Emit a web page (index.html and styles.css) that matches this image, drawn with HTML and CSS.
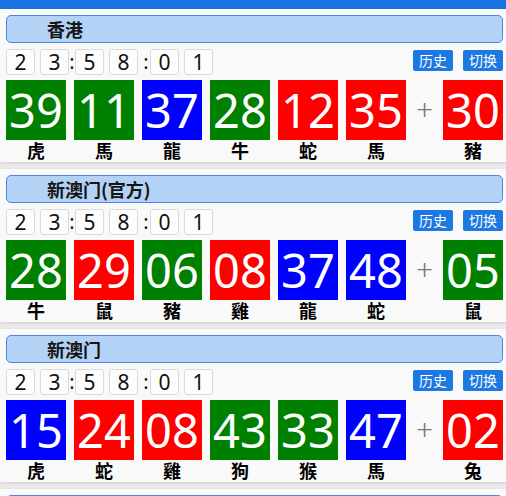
FILE: index.html
```html
<!DOCTYPE html>
<html lang="zh">
<head>
<meta charset="utf-8">
<link rel="stylesheet" href="styles.css">
</head>
<body>
<div class="topbar"></div>

<div class="section">
  <div class="title">香港</div>
  <div class="timer-row">
    <div class="timer">
      <span class="digit">2</span><span class="sp"></span><span class="digit">3</span><span class="colon c1">:</span><span class="digit">5</span><span class="sp"></span><span class="digit">8</span><span class="colon c2">:</span><span class="digit">0</span><span class="sp"></span><span class="digit">1</span>
    </div>
    <div class="btns"><span class="btn">历史</span><span class="btn">切换</span></div>
  </div>
  <div class="balls">
    <div class="ball"><div class="num green">39</div><div class="zod">虎</div></div>
    <div class="ball"><div class="num green">11</div><div class="zod">馬</div></div>
    <div class="ball"><div class="num blue">37</div><div class="zod">龍</div></div>
    <div class="ball"><div class="num green">28</div><div class="zod">牛</div></div>
    <div class="ball"><div class="num red">12</div><div class="zod">蛇</div></div>
    <div class="ball"><div class="num red">35</div><div class="zod">馬</div></div>
    <div class="plus">+</div>
    <div class="ball"><div class="num red">30</div><div class="zod">豬</div></div>
  </div>
</div>

<div class="section">
  <div class="title">新澳门(官方)</div>
  <div class="timer-row">
    <div class="timer">
      <span class="digit">2</span><span class="sp"></span><span class="digit">3</span><span class="colon c1">:</span><span class="digit">5</span><span class="sp"></span><span class="digit">8</span><span class="colon c2">:</span><span class="digit">0</span><span class="sp"></span><span class="digit">1</span>
    </div>
    <div class="btns"><span class="btn">历史</span><span class="btn">切换</span></div>
  </div>
  <div class="balls">
    <div class="ball"><div class="num green">28</div><div class="zod">牛</div></div>
    <div class="ball"><div class="num red">29</div><div class="zod">鼠</div></div>
    <div class="ball"><div class="num green">06</div><div class="zod">豬</div></div>
    <div class="ball"><div class="num red">08</div><div class="zod">雞</div></div>
    <div class="ball"><div class="num blue">37</div><div class="zod">龍</div></div>
    <div class="ball"><div class="num blue">48</div><div class="zod">蛇</div></div>
    <div class="plus">+</div>
    <div class="ball"><div class="num green">05</div><div class="zod">鼠</div></div>
  </div>
</div>

<div class="section">
  <div class="title">新澳门</div>
  <div class="timer-row">
    <div class="timer">
      <span class="digit">2</span><span class="sp"></span><span class="digit">3</span><span class="colon c1">:</span><span class="digit">5</span><span class="sp"></span><span class="digit">8</span><span class="colon c2">:</span><span class="digit">0</span><span class="sp"></span><span class="digit">1</span>
    </div>
    <div class="btns"><span class="btn">历史</span><span class="btn">切换</span></div>
  </div>
  <div class="balls">
    <div class="ball"><div class="num blue">15</div><div class="zod">虎</div></div>
    <div class="ball"><div class="num red">24</div><div class="zod">蛇</div></div>
    <div class="ball"><div class="num red">08</div><div class="zod">雞</div></div>
    <div class="ball"><div class="num green">43</div><div class="zod">狗</div></div>
    <div class="ball"><div class="num green">33</div><div class="zod">猴</div></div>
    <div class="ball"><div class="num blue">47</div><div class="zod">馬</div></div>
    <div class="plus">+</div>
    <div class="ball"><div class="num red">02</div><div class="zod">兔</div></div>
  </div>
</div>

<div class="section">
  <div class="title"></div>
</div>
</body>
</html>
```

FILE: styles.css
```css
html, body {
  margin: 0;
  padding: 0;
}
body {
  background: #ececec;
  font-family: "Noto Sans", "Noto Sans CJK SC", sans-serif;
  color: #000;
  overflow: hidden;
  height: 496px;
}
.topbar {
  height: 9px;
  background: #1b74e4;
}
.section {
  background: #f9f9f9;
  padding: 6px 3px 2px 6px;
  margin-bottom: 7px;
  box-shadow: 0 1px 4px rgba(0, 0, 0, 0.14);
}
.title {
  height: 26px;
  line-height: 26px;
  border: 1px solid #4a88d8;
  border-radius: 5px;
  background: #b4d2f6;
  padding-left: 40px;
  font-family: "Noto Sans CJK SC", sans-serif;
  font-weight: bold;
  font-size: 18px;
  color: #151515;
  margin-bottom: 6px;
}
.timer-row {
  display: flex;
  justify-content: space-between;
  align-items: center;
  height: 26px;
  margin-bottom: 5px;
}
.timer {
  display: flex;
  align-items: center;
}
.digit {
  width: 27px;
  height: 24px;
  border: 1px solid #d9d9d9;
  border-radius: 3px;
  background: #fdfdfd;
  font-size: 21px;
  line-height: 24px;
  text-align: center;
  color: #111;
}
.sp {
  width: 5px;
}
.colon {
  font-size: 20px;
  line-height: 24px;
  text-align: center;
  color: #111;
}
.c1 {
  width: 6px;
}
.c2 {
  width: 12px;
  padding-left: 4px;
  box-sizing: border-box;
}
.btns {
  display: flex;
  gap: 10px;
  margin-top: -4px;
}
.btn {
  width: 40px;
  height: 21px;
  line-height: 21px;
  background: #1c78e2;
  color: #fff;
  border-radius: 2px;
  text-align: center;
  font-family: "Noto Sans CJK SC", sans-serif;
  font-size: 14px;
}
.balls {
  display: flex;
  gap: 8px;
}
.ball {
  width: 60px;
  display: flex;
  flex-direction: column;
  align-items: center;
}
.num {
  width: 60px;
  height: 60px;
  line-height: 60px;
  text-align: center;
  color: #fff;
  font-size: 47px;
}
.green { background: #008000; }
.red { background: #ff0000; }
.blue { background: #0000ff; }
.zod {
  height: 20px;
  line-height: 20px;
  font-family: "Noto Sans CJK SC", sans-serif;
  font-weight: bold;
  font-size: 18px;
  color: #000;
}
.plus {
  width: 21px;
  height: 60px;
  line-height: 58px;
  text-align: center;
  font-size: 30px;
  font-weight: 300;
  color: #777;
}
```
